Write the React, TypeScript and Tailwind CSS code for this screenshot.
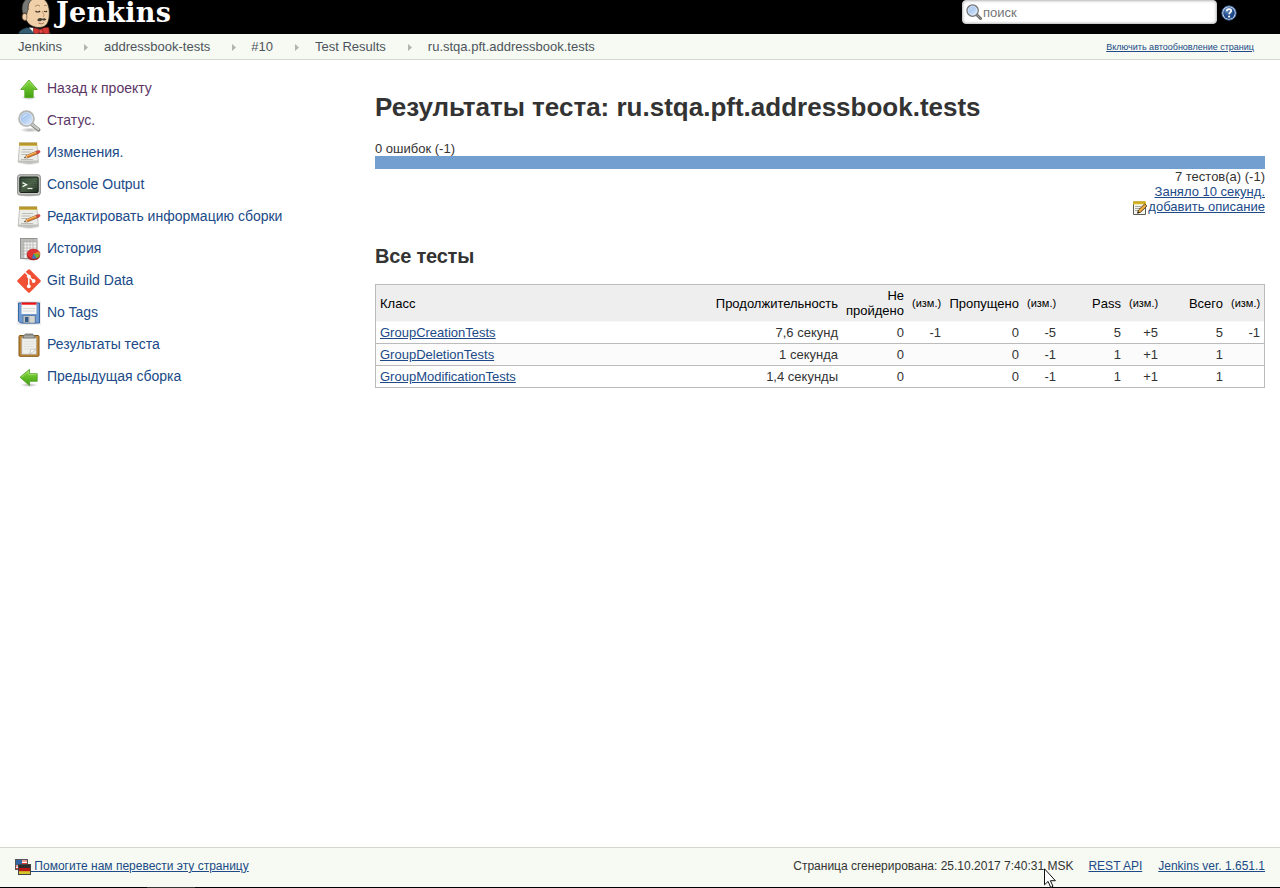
import React from "react";

const svg = (size: number, children: React.ReactNode) => (
  <svg width={size} height={size} viewBox={`0 0 ${size} ${size}`} className="shrink-0">
    {children}
  </svg>
);

const Gradients = () => (
  <svg width="0" height="0" className="absolute">
    <defs>
      <linearGradient id="green" x1="0" y1="0" x2="0" y2="1">
        <stop offset="0" stopColor="#8fdc4a" />
        <stop offset="0.5" stopColor="#62bd26" />
        <stop offset="1" stopColor="#459f14" />
      </linearGradient>
      <linearGradient id="lens" x1="0" y1="0" x2="1" y2="1">
        <stop offset="0" stopColor="#8fb6e8" />
        <stop offset="0.5" stopColor="#b5d0f3" />
        <stop offset="1" stopColor="#e6f1fd" />
      </linearGradient>
      <linearGradient id="screen" x1="0" y1="0" x2="1" y2="1">
        <stop offset="0" stopColor="#2f4031" />
        <stop offset="0.5" stopColor="#4a5e45" />
        <stop offset="1" stopColor="#1f2d21" />
      </linearGradient>
      <radialGradient id="shadow">
        <stop offset="0" stopColor="#000" stopOpacity="0.3" />
        <stop offset="1" stopColor="#000" stopOpacity="0" />
      </radialGradient>
      <radialGradient id="help" cx="0.4" cy="0.25">
        <stop offset="0" stopColor="#7097cf" />
        <stop offset="1" stopColor="#204a87" />
      </radialGradient>
    </defs>
  </svg>
);

const UpIcon = () =>
  svg(24, (
    <>
      <ellipse cx="12" cy="20.500" rx="8" ry="2.500" fill="url(#shadow)" />
      <path d="M12 3 20.300 12.500h-4.100v8H7.800v-8H3.700z" fill="url(#green)" stroke="#58aa22" strokeWidth="0.900" />
      <path d="M5.700 11.700 12 4.400l6.300 7.300" fill="none" stroke="#b4ec7e" strokeWidth="0.700" opacity="0.700" />
    </>
  ));

const BackIcon = () =>
  svg(24, (
    <>
      <ellipse cx="12" cy="20" rx="9" ry="2" fill="url(#shadow)" />
      <path d="M3 12.300 12.500 4.300v4.400h7.700v7.600h-7.700v4.300z" fill="url(#green)" stroke="#4c9a24" strokeWidth="0.800" />
      <path d="M4.800 12 11.700 6.300v3.300h7.800" fill="none" stroke="#b4ec7e" strokeWidth="0.800" opacity="0.800" />
    </>
  ));

const SearchIcon = () =>
  svg(24, (
    <>
      <ellipse cx="13" cy="21" rx="10" ry="2.500" fill="url(#shadow)" />
      <path d="m15 15.500 6.500 5.200" stroke="#858783" strokeWidth="3.800" strokeLinecap="round" />
      <path d="m15 15.300 6.300 4.900" stroke="#c8cac5" strokeWidth="2.200" strokeLinecap="round" />
      <circle cx="9.500" cy="9.700" r="7.400" fill="url(#lens)" stroke="#b5b7b3" strokeWidth="1.900" />
      <circle cx="9.500" cy="9.700" r="6.200" fill="none" stroke="#e7eaf0" strokeWidth="0.700" />
      <path d="M5 9.500c.5-3 3-5 6-4.500-2.500 1-4 2.500-6 4.500z" fill="#fff" opacity="0.550" />
    </>
  ));

const NotepadIcon = () =>
  svg(24, (
    <>
      <ellipse cx="12" cy="22" rx="11" ry="2" fill="url(#shadow)" />
      <path d="M2.500 4h17.500l1.300 17H1.200z" fill="#ecece8" stroke="#b5b5b1" strokeWidth="0.800" />
      <path d="M1.300 19.500h20l.3 2H1z" fill="#bfc0bc" />
      <path d="M2.200 1.800h18v3h-18z" fill="#d2b136" />
      <path d="M3 1v3M5 1v3M7 1v3M9 1v3M11 1v3M13 1v3M15 1v3M17 1v3M19 1v3" stroke="#8b711d" strokeWidth="0.800" />
      <path d="M5 8.500h11M4.500 11h9M4.500 13.500h6M4 18.500h12" stroke="#b6b6b2" strokeWidth="0.900" />
      <path d="m7.700 16.700 1.300-2.100 11.100-4.600 1.100 2.500-11 4.400z" fill="#e58a30" stroke="#7d4920" strokeWidth="0.700" />
      <path d="m9.600 14.900 10-4.100" stroke="#ffc56d" strokeWidth="0.900" />
      <path d="m19.200 10.400 2-1c1.500-.6 2.700 1.700 1.400 2.400l-2.200 1.100z" fill="#d84b46" stroke="#a93834" strokeWidth="0.400" />
      <path d="m7.500 16.900 1.500-2.300 1.300 2.300z" fill="#efdaad" />
      <path d="m7 17.200 1.300-1.600.5 1.200z" fill="#28231e" />
    </>
  ));

const ConsoleIcon = () =>
  svg(24, (
    <>
      <ellipse cx="12" cy="22" rx="11" ry="2" fill="url(#shadow)" />
      <rect x="0.700" y="1.800" width="22.600" height="20.200" rx="2" fill="#c9cac5" stroke="#848682" />
      <rect x="2.800" y="4" width="18.400" height="15.500" rx="1" fill="url(#screen)" stroke="#172118" />
      <path d="M3.500 6.500h17M3.500 8.500h17M3.500 10.500h17M3.500 12.500h17M3.500 14.500h17" stroke="#6b8670" strokeWidth="0.400" opacity="0.500" />
      <path d="m5.500 9.700 4 2-4 2" fill="none" stroke="#eef6ec" strokeWidth="1.300" />
      <path d="M10.500 15.500h5" stroke="#eef6ec" strokeWidth="1.200" />
    </>
  ));

const HistoryIcon = () =>
  svg(24, (
    <>
      <ellipse cx="13" cy="21.500" rx="10" ry="2.500" fill="url(#shadow)" />
      <rect x="3.500" y="1.500" width="16.500" height="20" fill="#f4f4f2" stroke="#92938f" />
      <path d="M4 2h15.500v3H4zM4 5h3v16H4z" fill="#bfc0bd" />
      <path d="M7 2v19M10 2v19M13 2v19M16 2v19M4 5h16M4 8h16M4 11h16M4 14h16M4 17h16" stroke="#aaaaa7" strokeWidth="0.600" />
      <ellipse cx="16.500" cy="18.800" rx="6.500" ry="4.500" fill="#9f1d1d" />
      <ellipse cx="16.500" cy="17" rx="6.500" ry="4.900" fill="#dd3434" stroke="#b72323" strokeWidth="0.500" />
      <path d="m16.300 16.500 3.300 4.800c2-.7 3.200-2 3.300-3.500z" fill="#73b62e" />
      <path d="m16.300 16.500-1.300 5.100c1.500.4 3.200.2 4.600-.3z" fill="#3d76ba" />
      <path d="m16.300 16.500 6.600 1.300c.3-1-.1-2.200-.8-3z" fill="#d98e2e" />
    </>
  ));

const GitIcon = () =>
  svg(24, (
    <>
      <path d="M10.900.700a1.600 1.600 0 0 1 2.200 0l10.200 10.200a1.600 1.600 0 0 1 0 2.200L13.100 23.300a1.600 1.600 0 0 1-2.200 0L.700 13.100a1.600 1.600 0 0 1 0-2.200z" fill="#f05033" />
      <path d="m8.200 3.300 3.600 3.700v10.200M12 7.500l4.500 4.500" fill="none" stroke="#fff" strokeWidth="1.500" />
      <circle cx="11.800" cy="7.300" r="1.900" fill="#fff" />
      <circle cx="11.800" cy="17.300" r="1.900" fill="#fff" />
      <circle cx="16.600" cy="12" r="1.900" fill="#fff" />
    </>
  ));

const SaveIcon = () =>
  svg(24, (
    <>
      <rect width="24" height="24" fill="#ececec" />
      <path d="M1.500 2h21v20H3.500l-2-2z" fill="#6f9bd2" stroke="#38679f" />
      <path d="M4.500 2h15v11h-15z" fill="#f7f7f5" />
      <path d="M4.500 1.500h15v2.200h-15z" fill="#ee1212" />
      <path d="M6 7.500h12M6 10h12" stroke="#d2d2cf" strokeWidth="0.800" />
      <path d="M6 14.500h12.500V22H6z" fill="#bfc1bd" stroke="#456da0" strokeWidth="0.700" />
      <path d="M8 16h3.500v5H8z" fill="#365a88" />
      <path d="M13 15h4v6.500h-4z" fill="#d3d4cf" />
    </>
  ));

const ClipboardIcon = () =>
  svg(24, (
    <>
      <rect x="2" y="2.500" width="20" height="20.800" rx="1" fill="#c18837" stroke="#805714" />
      <path d="M4.700 4.800h14.700v16.500H4.700z" fill="#eeeeeb" stroke="#a5a5a0" strokeWidth="0.600" />
      <path d="M7 8.500h10M7 11h10M7 13.500h10M7 16h6" stroke="#dcdcd9" strokeWidth="0.800" />
      <path d="m12.800 21.200.9-4.800 5.800-.4z" fill="#fff" stroke="#a9a9a5" strokeWidth="0.600" />
      <path d="M6 5V3.200L8.500 1h7L18 3.200V5z" fill="#92948f" stroke="#6c6e69" strokeWidth="0.800" />
      <path d="M7 3.800h10" stroke="#b5b7b2" />
    </>
  ));

const EditSmall = () => (
  <svg width="16" height="16" viewBox="0 0 16 16" className="mt-px shrink-0">
    <path d="M1.500 2.500h12v12h-12z" fill="#f5f5ef" stroke="#595b55" />
    <path d="M1 1.300h13v3H1z" fill="#e5c52e" />
    <path d="M2 1v2.500M4 1v2.500M6 1v2.500M8 1v2.500M10 1v2.500M12 1v2.500" stroke="#9a7c10" strokeWidth="0.700" />
    <path d="M3 6.500h6M3 8.500h5M3 10.500h3" stroke="#92948e" strokeWidth="0.800" />
    <path d="m5.500 13.200 1-3.200L12.600 4l2.300 2-6.300 6.200z" fill="#efad3e" stroke="#4a3418" strokeWidth="0.900" />
    <path d="m5.500 13.200.6-1.800 1.300 1z" fill="#111" />
  </svg>
);

const SmallSearch = () =>
  svg(16, (
    <>
      <path d="m10.500 10.500 4 4" stroke="#6b6c69" strokeWidth="3" strokeLinecap="round" />
      <path d="m10.500 10.500 4 4" stroke="#c3c5c0" strokeWidth="1" strokeDasharray="1.500 1" />
      <circle cx="6.600" cy="6.600" r="5.600" fill="url(#lens)" stroke="#777b7f" strokeWidth="1.500" />
      <circle cx="6.600" cy="6.600" r="4.500" fill="none" stroke="#e9f0f8" strokeWidth="0.700" />
      <path d="M3.500 6.600c.4-2 2-3.300 4-3-1.700.8-2.700 1.700-4 3z" fill="#fff" opacity="0.600" />
    </>
  ));

const HelpIcon = () =>
  svg(16, (
    <>
      <circle cx="8" cy="8" r="7.100" fill="#f2f6fb" stroke="#3d6aa8" strokeWidth="1" />
      <circle cx="8" cy="8" r="5.900" fill="url(#help)" />
      <path d="M5.700 6.200c.1-2.900 4.700-2.800 4.500-.2-.1 1.500-2 1.500-2 3.300" fill="none" stroke="#fff" strokeWidth="1.700" />
      <circle cx="8.100" cy="11.600" r="1.100" fill="#fff" />
    </>
  ));

const Butler = () => (
  <svg width="34" height="34" viewBox="0 0 34 34" className="shrink-0">
    <path d="M.500 34C1 30.500 4 29 9 27.500l17 1.500c4 .5 6 2 6.500 5z" fill="#335c70" stroke="#151b20" strokeWidth="0.800" />
    <path d="M11 27.500 17 34h3l-3-6z" fill="#f6f4ee" />
    <path d="M8 10C7 3 11-2 18-2.500 27-3 31 3 31.300 11c.2 7-.3 14.500-7.300 16.200C18 28.500 11 26 8.500 20.500c-5 1-5.500-7.500-.5-7z" fill="#efd0a9" stroke="#2a2320" strokeWidth="0.800" />
    <path d="M5 14C2.500 7 5 .500 10-2h6C11 1 9.800 4.500 10.300 9.500 9 11 9.300 13 8.500 15 7.500 12.500 6 12.500 5 14z" fill="#777773" stroke="#2a2927" strokeWidth="0.700" />
    <path d="M4.500 15c.8-2.300 4-2 4.300.5.200 2 0 4.500-1.500 5-2.500 0-3.800-3-2.800-5.500z" fill="#f0cfaa" stroke="#5b4534" strokeWidth="0.700" />
    <path d="M17 6.500c1.500-1.700 3.500-1.700 5-.3M26 6c1-.9 2.300-.9 3.200 0" fill="none" stroke="#8f7055" strokeWidth="0.800" />
    <path d="M17.500 11c1.200 1.200 3.200 1.200 4.700 0M26 11c.9 1 2 1 3 0" fill="none" stroke="#3c2b22" strokeWidth="1.100" />
    <path d="M24.500 11c0 2.500 3 4.500.5 6" fill="none" stroke="#bb8664" strokeWidth="0.900" />
    <path d="M19.200 20.300c1-2.600 3.500-2.900 5-1.500 1.700-1 3.600-.6 4.100 1-1.400 1.100-2.700.8-4.100.1-1.300 1.400-3.700 1.800-5 .4z" fill="#473c34" />
    <path d="M20.500 23c2 1.200 4 1 5.500-.4" fill="none" stroke="#9c5b48" strokeWidth="0.900" />
    <path d="M15.800 28c2.300-.3 4.500.8 5.800 2 2.200-1.800 6-3.200 9-2.800.7 2.200.8 4.500.5 6.800h-4l-3.300-1.500L16.500 34c-1-1.500-1.300-4.500-.7-6z" fill="#d33833" stroke="#5b1613" strokeWidth="0.700" />
    <path d="m20.800 29.700 3.500-.5.800 3.900-3.500.3z" fill="#e34b43" stroke="#7d201c" strokeWidth="0.600" />
  </svg>
);

const Flags = () => (
  <svg width="16" height="16" viewBox="0 0 16 16" className="shrink-0">
    <rect x="0.500" y="0.500" width="12" height="10" fill="#fff" stroke="#555" />
    <path d="M1 2h11M1 4.500h11M1 7h11M1 9.500h11" stroke="#df3b32" strokeWidth="1.200" />
    <path d="M1 1h6v5H1z" fill="#3465a4" />
    <rect x="3.500" y="5.500" width="12" height="10" fill="#d7c52f" stroke="#444" />
    <path d="M4 6h11v3H4z" fill="#2d2d2d" />
    <path d="M4 9h11v3.200H4z" fill="#b91616" />
  </svg>
);

const menu: [() => React.JSX.Element, string, boolean][] = [
  [UpIcon, "Назад к проекту", true],
  [SearchIcon, "Статус.", true],
  [NotepadIcon, "Изменения.", false],
  [ConsoleIcon, "Console Output", false],
  [NotepadIcon, "Редактировать информацию сборки", false],
  [HistoryIcon, "История", false],
  [GitIcon, "Git Build Data", false],
  [SaveIcon, "No Tags", false],
  [ClipboardIcon, "Результаты теста", false],
  [BackIcon, "Предыдущая сборка", false],
];

const rows = [
  ["GroupCreationTests", "7,6 секунд", "0", "-1", "0", "-5", "5", "+5", "5", "-1"],
  ["GroupDeletionTests", "1 секунда", "0", "", "0", "-1", "1", "+1", "1", ""],
  ["GroupModificationTests", "1,4 секунды", "0", "", "0", "-1", "1", "+1", "1", ""],
];

const columns = "grid grid-cols-[240px_226px_66px_37px_78px_37px_65px_37px_65px_37px]";

const Arrow = ({ className }: { className: string }) => (
  <svg width="4" height="7" viewBox="0 0 4 7" className={`mt-px shrink-0 ${className}`}>
    <path d="M0 0 4 3.500 0 7z" fill="#b1b3af" />
  </svg>
);

const Change = () => <span className="text-[11px]">(изм.)</span>;

export default function App() {
  return (
    <div className="relative flex h-[888px] w-[1280px] flex-col overflow-hidden bg-white font-['Liberation_Sans',Arial,sans-serif] text-[13px] leading-[15px] text-[#333]">
      <Gradients />
      <header className="flex h-[34px] shrink-0 items-start bg-black pl-[18px]">
        <Butler />
        <span className="ml-1 font-['DejaVu_Serif',serif] text-[27px] leading-[26px] font-bold tracking-[0.25px] text-white">Jenkins</span>
        <div className="ml-auto flex h-6 w-[255px] items-center gap-px rounded-[4px] border border-[#ccc] bg-white pl-[3px] text-[#757575] shadow-[inset_0_0_3px_#bbb]">
          <SmallSearch />
          <span>поиск</span>
        </div>
        <div className="mt-[5px] mr-[43px] ml-1">
          <HelpIcon />
        </div>
      </header>
      <nav className="flex h-[26px] shrink-0 items-center border-b border-[#d3d7cf] bg-[#f6faf2] pr-[26px] pl-[18px] text-[#4d545d]">
        <span>Jenkins</span>
        <Arrow className="mr-4 ml-[22px]" />
        <span>addressbook-tests</span>
        <Arrow className="mr-[15px] ml-[22px]" />
        <span>#10</span>
        <Arrow className="mr-4 ml-[22px]" />
        <span>Test Results</span>
        <Arrow className="mr-4 ml-[22px]" />
        <span>ru.stqa.pft.addressbook.tests</span>
        <a className="mt-px ml-auto text-[9px] text-[#204a87] underline">Включить автообновление страниц</a>
      </nav>
      <div className="flex grow">
        <aside className="flex w-[375px] shrink-0 flex-col pt-[13px] pl-[17px]">
          {menu.map(([Icon, label, visited]) => (
            <a key={label} className={`flex h-8 items-center gap-1.5 text-[14px] ${visited ? "text-[#5c3566]" : "text-[#204a87]"}`}>
              <span className="-mt-px">
                <Icon />
              </span>
              <span className="-mt-px">{label}</span>
            </a>
          ))}
        </aside>
        <main className="w-[890px] shrink-0">
          <h1 className="mt-8 text-[26px] leading-[30px] font-bold">Результаты теста: ru.stqa.pft.addressbook.tests</h1>
          <div className="mt-[19px]">0 ошибок (-1)</div>
          <div className="h-[13px] bg-[#729fcf]" />
          <div className="flex flex-col items-end">
            <span>7 тестов(а) (-1)</span>
            <a className="text-[#204a87] underline">Заняло 10 секунд.</a>
            <a className="flex h-4 text-[#204a87] underline">
              <EditSmall />
              <span>добавить описание</span>
            </a>
          </div>
          <h2 className="mt-[29px] text-[20px] leading-6 font-bold tracking-[-0.2px]">Все тесты</h2>
          <div className="mt-4 border border-b-0 border-[#bbb]">
            <div className={`${columns} h-[37px] items-center border-b border-[#f8f8f8] bg-[#eee] text-right text-black [&>*]:px-1`}>
              <span className="text-left">Класс</span>
              <span>Продолжительность</span>
              <span>Не пройдено</span>
              <Change />
              <span>Пропущено</span>
              <Change />
              <span>Pass</span>
              <Change />
              <span>Всего</span>
              <Change />
            </div>
            {rows.map((row, r) => (
              <div key={row[0]} className={`${columns} h-[22px] items-center border-b border-[#bbb] text-right [&>*]:px-1 ${r === 1 ? "bg-[#fbfbfb]" : "bg-white"}`}>
                {row.map((cell, c) =>
                  c === 0 ? (
                    <a key={c} className="text-left text-[#204a87] underline">{cell}</a>
                  ) : (
                    <span key={c}>{cell}</span>
                  ),
                )}
              </div>
            ))}
          </div>
        </main>
      </div>
      <footer className="flex h-10 shrink-0 items-start border-t border-[#d3d7cf] bg-[#f6faf2] px-[15px] pt-[11px] text-[12px] leading-[14px]">
        <Flags />
        <a className="whitespace-pre text-[#204a87] underline"> Помогите нам перевести эту страницу</a>
        <span className="mr-[15px] ml-auto">Страница сгенерирована: 25.10.2017 7:40:31 MSK</span>
        <a className="mr-4 text-[#204a87] underline">REST API</a>
        <a className="text-[#204a87] underline">Jenkins ver. 1.651.1</a>
      </footer>
      <div className="flex h-px shrink-0 bg-black pl-[147px]">
        <div className="w-12 bg-[#333]" />
      </div>
      <svg width="13" height="20" viewBox="0 0 13 20" className="absolute top-[868px] left-[1044px]">
        <path d="M.500.800v16l3.600-3.400 2.600 6 2.300-1-2.600-5.700h5z" fill="#fff" stroke="#111" />
      </svg>
    </div>
  );
}
